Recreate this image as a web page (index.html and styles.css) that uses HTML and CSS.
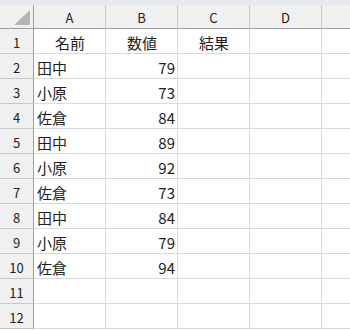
FILE: index.html
```html
<!DOCTYPE html>
<html lang="ja">
<head>
  <meta charset="UTF-8">
  <title>Sheet1</title>
  <link rel="stylesheet" href="styles.css">
</head>
<body>
  <div class="topbar"></div>
  <div class="sheet">
    <div class="corner"><div class="tri"></div></div>
    <div class="col-head">A</div>
    <div class="col-head">B</div>
    <div class="col-head">C</div>
    <div class="col-head">D</div>
    <div class="col-head last"></div>

    <div class="row-head">1</div>
    <div class="cell center">名前</div>
    <div class="cell center">数値</div>
    <div class="cell center">結果</div>
    <div class="cell"></div>
    <div class="cell last"></div>

    <div class="row-head">2</div>
    <div class="cell">田中</div>
    <div class="cell num">79</div>
    <div class="cell"></div>
    <div class="cell"></div>
    <div class="cell last"></div>

    <div class="row-head">3</div>
    <div class="cell">小原</div>
    <div class="cell num">73</div>
    <div class="cell"></div>
    <div class="cell"></div>
    <div class="cell last"></div>

    <div class="row-head">4</div>
    <div class="cell">佐倉</div>
    <div class="cell num">84</div>
    <div class="cell"></div>
    <div class="cell"></div>
    <div class="cell last"></div>

    <div class="row-head">5</div>
    <div class="cell">田中</div>
    <div class="cell num">89</div>
    <div class="cell"></div>
    <div class="cell"></div>
    <div class="cell last"></div>

    <div class="row-head">6</div>
    <div class="cell">小原</div>
    <div class="cell num">92</div>
    <div class="cell"></div>
    <div class="cell"></div>
    <div class="cell last"></div>

    <div class="row-head">7</div>
    <div class="cell">佐倉</div>
    <div class="cell num">73</div>
    <div class="cell"></div>
    <div class="cell"></div>
    <div class="cell last"></div>

    <div class="row-head">8</div>
    <div class="cell">田中</div>
    <div class="cell num">84</div>
    <div class="cell"></div>
    <div class="cell"></div>
    <div class="cell last"></div>

    <div class="row-head">9</div>
    <div class="cell">小原</div>
    <div class="cell num">79</div>
    <div class="cell"></div>
    <div class="cell"></div>
    <div class="cell last"></div>

    <div class="row-head">10</div>
    <div class="cell">佐倉</div>
    <div class="cell num">94</div>
    <div class="cell"></div>
    <div class="cell"></div>
    <div class="cell last"></div>

    <div class="row-head">11</div>
    <div class="cell"></div>
    <div class="cell"></div>
    <div class="cell"></div>
    <div class="cell"></div>
    <div class="cell last"></div>

    <div class="row-head">12</div>
    <div class="cell"></div>
    <div class="cell"></div>
    <div class="cell"></div>
    <div class="cell"></div>
    <div class="cell last"></div>
  </div>
</body>
</html>
```

FILE: styles.css
```css
body {
  margin: 0;
  padding: 0;
  background-color: #fff;
  font-family: "Noto Sans CJK JP", "Noto Sans", sans-serif;
  color: #1e1e1e;
  overflow: hidden;
}

.topbar {
  height: 5px;
  background-color: #e6e9ed;
}

.sheet {
  display: grid;
  grid-template-columns: 34px repeat(4, 72px) 1fr;
  grid-template-rows: 24px repeat(12, 25px);
}

.corner,
.col-head,
.row-head {
  background-color: #f0f0f0;
  color: #222;
  font-size: 13px;
  display: flex;
  align-items: center;
  justify-content: center;
}

.corner {
  border-right: 1px solid #9f9f9f;
  border-bottom: 1px solid #9f9f9f;
  position: relative;
}

.tri {
  position: absolute;
  right: 3px;
  bottom: 3px;
  width: 0;
  height: 0;
  border-left: 16px solid transparent;
  border-bottom: 15px solid #b4b4b4;
}

.col-head {
  border-right: 1px solid #c6c6c6;
  border-bottom: 1px solid #9f9f9f;
  padding-top: 1px;
}

.row-head {
  border-right: 1px solid #9f9f9f;
  border-bottom: 1px solid #c6c6c6;
  padding-top: 2px;
}

.cell {
  border-right: 1px solid #dadada;
  border-bottom: 1px solid #dadada;
  font-size: 15px;
  display: flex;
  align-items: center;
  padding: 2px 2px 0 3px;
  white-space: nowrap;
  overflow: hidden;
}

.center {
  justify-content: center;
}

.num {
  justify-content: flex-end;
  padding-right: 2px;
}

.last {
  border-right: none;
}
```
